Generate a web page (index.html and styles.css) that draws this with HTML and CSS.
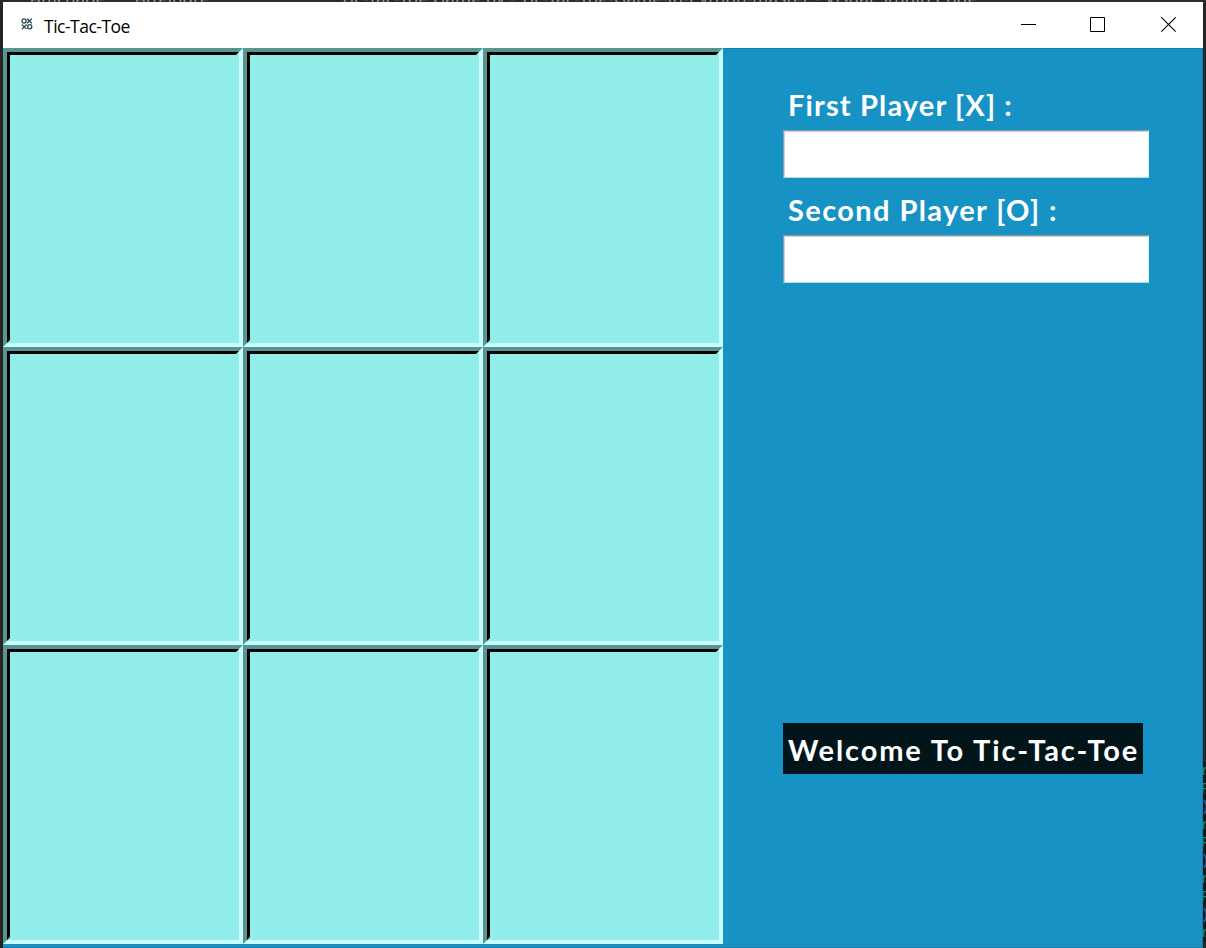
FILE: index.html
```html
<!DOCTYPE html>
<html lang="en">
<head>
<meta charset="utf-8">
<title>Tic-Tac-Toe</title>
<link rel="stylesheet" href="styles.css">
</head>
<body>
<div class="editor-title"><span class="menu-a">Affichage</span><span class="menu-b">Atteindre</span><span class="menu-c">...</span><span class="doc">Tic-Tac-Toe Game.py - Tic-Tac-Toe-Game-in-Python-master - Visual Studio Code</span></div>
<div class="terminal"><i>r</i><i>F</i><i>)</i><i>r</i><i>F</i><i>)</i><i>r</i><i>F</i><i>)</i><i>r</i></div>
<main class="window">
  <header class="titlebar">
    <svg class="app-icon" width="12" height="12" viewBox="0 0 12 12"><g fill="none" stroke="#24474f" stroke-width="1.3"><circle cx="3" cy="3" r="2.1"/><path d="M6 .7l4.8 4.6M10.8 .7L6 5.3M.8 6.5l4.8 4.6M5.6 6.5L.8 11.1"/><circle cx="8.7" cy="8.8" r="2.1"/></g></svg>
    <span class="title">Tic-Tac-Toe</span>
    <div class="controls">
      <svg class="minimize" width="16" height="16" viewBox="0 0 16 16"><path d="M0 7.5h15" stroke="#000" fill="none"/></svg>
      <svg width="16" height="16" viewBox="0 0 16 16"><path d="M.5 .5h14v14H.5z" stroke="#000" fill="none"/></svg>
      <svg width="16" height="16" viewBox="0 0 16 16"><path d="M.3 .3l14.4 14.4M14.7 .3L.3 14.7" stroke="#000" stroke-width="1.1" fill="none"/></svg>
    </div>
  </header>
  <div class="content">
    <section class="board">
      <div class="cell"></div><div class="cell"></div><div class="cell"></div>
      <div class="cell"></div><div class="cell"></div><div class="cell"></div>
      <div class="cell"></div><div class="cell"></div><div class="cell"></div>
    </section>
    <aside class="side">
      <label class="label first" for="p1">First Player [X] :</label>
      <input class="entry" id="p1" type="text">
      <label class="label second" for="p2">Second Player [O] :</label>
      <input class="entry" id="p2" type="text">
      <div class="status">Welcome To Tic-Tac-Toe</div>
    </aside>
  </div>
</main>
</body>
</html>
```
FILE: styles.css
```css
* { box-sizing: border-box; }
body {
  position: relative;
  width: 1206px;
  height: 948px;
  margin: 0;
  padding: 2px 3px 0;
  overflow: hidden;
  background: #252526;
  font-family: "Noto Sans", sans-serif;
}
.editor-title {
  position: absolute;
  left: 0;
  top: 0;
  width: 1206px;
  height: 6px;
  overflow: hidden;
  background: #2b292a;
  color: #9a9a9a;
  font-size: 17px;
  line-height: 20px;
  white-space: nowrap;
}
.editor-title span { position: absolute; top: -12px; }
.menu-a { left: 30px; }
.menu-b { left: 135px; }
.menu-c { left: 245px; }
.doc { left: 340px; letter-spacing: .23px; }
.terminal {
  position: absolute;
  right: 0;
  top: 762px;
  width: 5px;
  overflow: hidden;
  background: #191919;
  font: 14px/18px "Liberation Mono", monospace;
  color: #168b74;
}
.terminal i { display: block; font-style: normal; }
.terminal i:nth-child(3n) { color: #2870b8; }
.window { position: relative; width: 1200px; height: 946px; }
.titlebar {
  display: flex;
  align-items: center;
  height: 46px;
  padding-left: 18px;
  background: #fff;
}
.app-icon { margin-top: -2px; }
.title {
  margin-left: 11px;
  padding-top: 2px;
  font-family: "Open Sans", sans-serif;
  font-size: 17.5px;
  line-height: 24px;
  letter-spacing: -.5px;
  color: #000;
}
.controls {
  display: flex;
  gap: 55px;
  margin-left: auto;
  padding: 0 26px 0 0;
}
.minimize { margin-right: -2px; }
.content {
  display: flex;
  height: 900px;
  border-bottom: 1px solid #147da8;
  background: #1792c5;
}
.board {
  display: grid;
  grid-template-columns: repeat(3, 240px);
  grid-template-rows: 299px 298px 299px;
}
.cell {
  display: grid;
  border: solid;
  border-width: 4px;
  border-color: #589490 #c8fffe #c8fffe #589490;
}
.cell::before {
  content: "";
  border: 3px solid;
  border-color: #000 #90ede9 #90ede9 #000;
  background: #90ede9;
}
.side {
  flex: 1;
  display: flex;
  flex-direction: column;
  align-items: flex-start;
  padding-left: 60px;
  border-top: 1px solid #147da8;
  border-right: 1px solid #147da8;
}
.label, .status {
  padding-left: 5px;
  font-family: Lato, sans-serif;
  font-size: 29px;
  font-weight: 700;
  line-height: 50px;
  color: #fff;
  white-space: nowrap;
}
.label { height: 50px; }
.first { margin-top: 31px; letter-spacing: 1.15px; }
.second { margin-top: 7px; letter-spacing: 1.4px; }
.entry {
  width: 366px;
  height: 48px;
  padding: 0 5px;
  border: 1px solid;
  border-color: #8c9da5 #e3f2f7 #b4d9e7 #8c9da5;
  border-radius: 0;
  box-shadow: inset 1px 1px #cfcfcf;
  background: #fff;
  font-size: 28px;
  outline: 0;
}
.status {
  width: 360px;
  height: 51px;
  margin-top: 440px;
  padding-top: 2px;
  background: #02151b;
  letter-spacing: 1.88px;
}
```
